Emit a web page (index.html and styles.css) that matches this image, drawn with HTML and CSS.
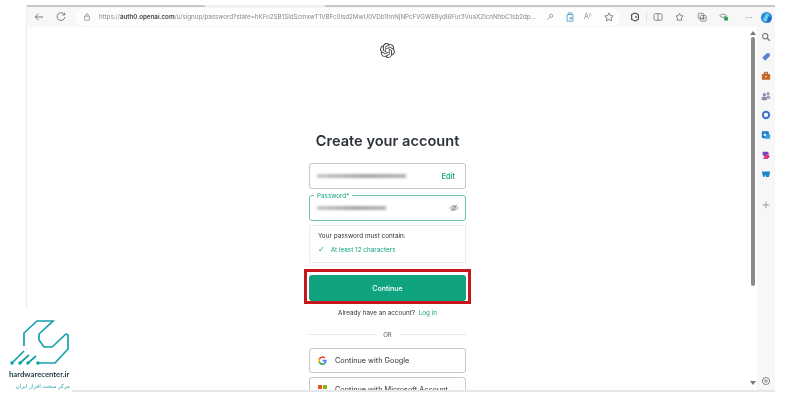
FILE: index.html
```html
<!DOCTYPE html>
<html lang="en">
<head>
<meta charset="utf-8">
<title>Create your account</title>
<link rel="stylesheet" href="styles.css">
</head>
<body>
<div class="window">
  <div class="topline"><span class="seg seg-a"></span><span class="seg seg-b"></span><span class="seg seg-c"></span></div>
  <div class="toolbar">
    <svg class="ic ic-back" viewBox="0 0 12 12"><path d="M11 6H1.5M5.5 2 1.5 6l4 4"/></svg>
    <svg class="ic ic-reload" viewBox="0 0 12 12"><path d="M10 3.2A4.6 4.6 0 1 0 10.6 6M10.3 1v2.6H7.7"/></svg>
    <div class="address">
      <svg class="ic-sm" viewBox="0 0 10 10"><path d="M2 4h6v5H2zM3.5 4V2.4a1.5 1.5 0 0 1 3 0V4"/></svg>
      <span class="url">https://<b>auth0.openai.com</b>/u/signup/password?state=hKFo2SB1SldScmxwT1VBFc0lsd2MwU0VDb1hnNjNPcFVGWE8ydl6Fur3VuaXZlcnNhbC1sb2dp...</span>
      <svg class="ic-sm key" viewBox="0 0 10 10"><circle cx="6.5" cy="3.5" r="2"/><path d="M5 5 1.5 8.5"/></svg>
      <svg class="ic-md wallet" viewBox="0 0 10 12"><path d="M1.5 3h7v8h-7zM3 3V1h4v2"/><circle cx="6" cy="7.5" r="1.2"/></svg>
      <span class="read">A<sup>))</sup></span>
      <svg class="ic-md star" viewBox="0 0 12 12"><path d="m6 1 1.5 3.3 3.6.4-2.7 2.4.8 3.6L6 8.9l-3.2 1.8.8-3.6L.9 4.7l3.6-.4z"/></svg>
    </div>
    <div class="tools">
      <svg class="ic-md dark" viewBox="0 0 12 12"><path d="M6 1.2 10 3v6L6 10.8 2 9V3z"/><path d="M8.5 6H6"/></svg>
      <span class="divider"></span>
      <svg class="ic-md" viewBox="0 0 12 12"><rect x="1.2" y="2" width="9.6" height="8" rx="2"/><path d="M6 2v8"/></svg>
      <svg class="ic-md" viewBox="0 0 12 12"><path d="m5.5 1.5 1.3 2.8 3 .4L7.600 6.800l.6 3H2.500l.5-3-2-2.100 3-.4z"/></svg>
      <svg class="ic-md" viewBox="0 0 12 12"><rect x="1.500" y="1.500" width="6.500" height="6.500" rx="1.500"/><rect x="4" y="4" width="7" height="7" rx="1.500"/><path d="M7.500 5.500v4M5.500 7.500h4"/></svg>
      <svg class="ic-md" viewBox="0 0 12 12"><path d="M1 4.500C3 2 7 2 9 4.500 7 7 3 7 1 4.500z"/><circle class="fill-green" cx="8.500" cy="8" r="2.600"/></svg>
      <span class="dots">···</span>
      <svg class="copilot" viewBox="0 0 14 14"><circle cx="7" cy="7" r="6" fill="#2b8fe0"/><path d="M3 10 7 2.500l3 1-3.500 8z" fill="#6fd0e8"/><path d="M9 6l3.500 1-2 5-3 .5z" fill="#2467c9"/></svg>
    </div>
  </div>
  <div class="body">
    <main class="page">
      <svg class="openai" viewBox="0 0 24 24"><path d="M22.282 9.821a5.985 5.985 0 0 0-.516-4.91 6.046 6.046 0 0 0-6.51-2.9A6.065 6.065 0 0 0 4.981 4.18a5.985 5.985 0 0 0-3.998 2.9 6.046 6.046 0 0 0 .743 7.097 5.98 5.98 0 0 0 .51 4.911 6.051 6.051 0 0 0 6.515 2.9A5.985 5.985 0 0 0 13.26 24a6.056 6.056 0 0 0 5.772-4.206 5.99 5.99 0 0 0 3.997-2.9 6.056 6.056 0 0 0-.747-7.073zM13.26 22.43a4.476 4.476 0 0 1-2.876-1.04l.141-.081 4.779-2.758a.795.795 0 0 0 .392-.681v-6.737l2.02 1.168a.071.071 0 0 1 .038.052v5.583a4.504 4.504 0 0 1-4.494 4.494zM3.6 18.304a4.47 4.47 0 0 1-.535-3.014l.142.085 4.783 2.759a.771.771 0 0 0 .78 0l5.843-3.369v2.332a.08.08 0 0 1-.033.062L9.74 19.95a4.5 4.5 0 0 1-6.14-1.646zM2.34 7.896a4.485 4.485 0 0 1 2.366-1.973V11.6a.766.766 0 0 0 .388.676l5.815 3.355-2.02 1.168a.076.076 0 0 1-.071 0l-4.83-2.786A4.504 4.504 0 0 1 2.34 7.872zm16.597 3.855l-5.833-3.387L15.119 7.2a.076.076 0 0 1 .071 0l4.83 2.791a4.494 4.494 0 0 1-.676 8.105v-5.678a.79.79 0 0 0-.407-.667zm2.01-3.023l-.141-.085-4.774-2.782a.776.776 0 0 0-.785 0L9.409 9.23V6.897a.066.066 0 0 1 .028-.061l4.83-2.787a4.5 4.5 0 0 1 6.68 4.66zm-12.64 4.135l-2.02-1.164a.08.08 0 0 1-.038-.057V6.075a4.5 4.5 0 0 1 7.375-3.453l-.142.08L8.704 5.46a.795.795 0 0 0-.393.681zm1.097-2.365l2.602-1.5 2.607 1.5v2.999l-2.597 1.5-2.607-1.5z"/></svg>
      <h1 class="title">Create your account</h1>
      <div class="form">
        <div class="field">
          <span class="mask mask-email"></span>
          <span class="edit">Edit</span>
        </div>
        <div class="field field-active">
          <span class="float-label">Password*</span>
          <span class="mask mask-pass"></span>
          <svg class="eye" viewBox="0 0 12 12"><path d="M1 6c2.500-3.600 7.500-3.600 10 0-2.500 3.600-7.500 3.600-10 0z"/><circle cx="6" cy="6" r="1.800"/><path d="M9.500 2 2.500 10"/></svg>
        </div>
        <div class="rules">
          <div class="rules-head">Your password must contain:</div>
          <div class="rule"><span class="check">✓</span><span>At least 12 characters</span></div>
        </div>
        <div class="highlight"><button class="continue">Continue</button></div>
        <p class="login">Already have an account? <a class="link">Log in</a></p>
        <div class="or"><span class="rule-line"></span><span class="or-text">OR</span><span class="rule-line"></span></div>
        <div class="social">
          <svg class="brand" viewBox="0 0 24 24"><path fill="#4285f4" d="M23 12.300c0-.8-.1-1.600-.2-2.300H12v4.500h6.200a5.300 5.300 0 0 1-2.300 3.500v2.800h3.700c2.100-2 3.400-5 3.400-8.500z"/><path fill="#34a853" d="M12 24c3.100 0 5.700-1 7.600-2.800L15.900 18.400c-1 .7-2.400 1.100-3.900 1.100-3 0-5.500-2-6.400-4.700H1.800v2.900A12 12 0 0 0 12 24z"/><path fill="#fbbc05" d="M5.600 14.800a7 7 0 0 1 0-4.600V7.300H1.800a12 12 0 0 0 0 10.400z"/><path fill="#ea4335" d="M12 4.800c1.700 0 3.200.6 4.400 1.700l3.300-3.300A12 12 0 0 0 1.800 7.300l3.800 2.900C6.500 7 9 4.800 12 4.800z"/></svg>
          <span>Continue with Google</span>
        </div>
        <div class="social">
          <span class="ms"><i class="r"></i><i class="g"></i><i class="b"></i><i class="y"></i></span>
          <span>Continue with Microsoft Account</span>
        </div>
      </div>
    </main>
    <div class="scrollbar">
      <span class="arrow-up"></span>
      <span class="thumb"></span>
      <span class="arrow-down"></span>
    </div>
    <aside class="sidebar">
      <svg class="side" viewBox="0 0 12 12"><circle cx="5" cy="5" r="3.200" fill="none" stroke="#777" stroke-width="1.300"/><path d="m7.500 7.500 3 3" stroke="#777" stroke-width="1.500"/></svg>
      <svg class="side" viewBox="0 0 12 12"><path d="M1.500 6.500 7 1.500h3.500V5L5 10.500z" fill="#5b7fd0"/></svg>
      <svg class="side" viewBox="0 0 12 12"><rect x="1" y="3.500" width="10" height="7" rx="1" fill="#c8662b"/><rect x="4" y="1.500" width="4" height="2" fill="none" stroke="#a85525"/><rect x="5" y="6" width="2" height="1.500" fill="#f3d9c4"/></svg>
      <svg class="side" viewBox="0 0 12 12"><circle cx="4" cy="4.500" r="2" fill="#8c8ca8"/><circle cx="8.500" cy="3" r="1.800" fill="#9a8fc0"/><rect x="1" y="7" width="6" height="4" fill="#8a8a9a"/><rect x="7" y="5.500" width="4" height="4" fill="#a89fc8"/></svg>
      <svg class="side" viewBox="0 0 12 12"><circle cx="6" cy="6" r="3.800" fill="none" stroke="#3f6fd0" stroke-width="2.400"/></svg>
      <svg class="side" viewBox="0 0 12 12"><rect x="1" y="1.500" width="8.500" height="8.500" rx="1.500" fill="#1a78c8"/><rect x="5" y="5" width="6" height="5.500" fill="#35a5e0"/><circle cx="4.500" cy="5.800" r="1.600" fill="#e6f2fb"/></svg>
      <svg class="side" viewBox="0 0 12 12"><path d="M2 2h6l2 2.500L7 6l3 2-2 2.500H2L5 8 2 6z" fill="#7d3fc0"/><path d="M5 6h5v2.500L8 10.500H3z" fill="#e0357a"/></svg>
      <svg class="side" viewBox="0 0 12 12"><path d="M1 3h10L9.500 9.500H6L5 7 4 9.500H2.500z" fill="#1a86c8"/></svg>
      <svg class="side side-plus" viewBox="0 0 12 12"><path d="M6 2v8M2 6h8" stroke="#888"/></svg>
      <svg class="side side-gear" viewBox="0 0 12 12"><circle cx="6" cy="6" r="4.200" fill="none" stroke="#777" stroke-width="1.300" stroke-dasharray="2 .6"/><circle cx="6" cy="6" r="1.500" fill="none" stroke="#777"/></svg>
    </aside>
  </div>
</div>
<div class="brandmark">
  <svg class="wrench" viewBox="0 0 72 56"><path d="M39 54H55L68 40V26L66 25 52 38H44L39 31V25L53 12H37L24 24V37"/><path d="M12 54 24 42M20 54 29 46M28 54 36 47"/><circle cx="12" cy="54" r="1.800"/><circle cx="20" cy="54" r="1.800"/><circle cx="28" cy="54" r="1.800"/><circle cx="38" cy="54" r="1.800"/></svg>
  <div class="brand-name">hardwarecenter.ir</div>
  <div class="brand-fa" lang="fa" dir="rtl">مرکز سخت افزار ایران</div>
</div>
</body>
</html>
```
FILE: styles.css
```css
* { box-sizing: border-box; }
html, body { margin: 0; padding: 0; }
body {
  width: 800px;
  height: 400px;
  background: #fff;
  overflow: hidden;
  position: relative;
  font-family: "Inter", "Liberation Sans", sans-serif;
  color: #2d333a;
}
.window {
  margin: 5px 0 0 26px;
  width: 749px;
  height: 387px;
  display: flex;
  flex-direction: column;
  border-left: 1px solid #ececec;
  border-bottom: 2px solid #e6e6e6;
  filter: blur(0.5px);
}
.topline { display: flex; height: 2px; flex: none; }
.seg { display: block; height: 2px; background: #c9c9c9; }
.seg-a { width: 178px; }
.seg-b { width: 120px; background: #efefef; }
.seg-c { flex: 1; }

.toolbar {
  height: 20px;
  flex: none;
  background: #f7f7f7;
  display: flex;
  align-items: center;
  padding-left: 7px;
}
.ic { width: 10px; height: 10px; fill: none; stroke: #666; stroke-width: 1; flex: none; }
.ic-reload { margin-left: 12px; }
.ic-sm { width: 8px; height: 8px; fill: none; stroke: #777; stroke-width: .8; flex: none; }
.ic-md { width: 10px; height: 10px; fill: none; stroke: #666; stroke-width: .9; flex: none; }
.address {
  margin-left: 9px;
  width: 545px;
  height: 18px;
  background: #fdfdfd;
  border-radius: 9px;
  display: flex;
  align-items: center;
  padding-left: 8px;
  font-size: 7px;
  color: #8a8a8a;
  white-space: nowrap;
}
.url {
  margin-left: 8px;
  width: 439px;
  flex: none;
  font-size: 6.250px;
  letter-spacing: -0.02px;
}
.url b { color: #444; font-weight: 600; }
.key { margin-left: 8px; }
.wallet { margin-left: 11px; stroke: #3a8fb8; }
.read { margin-left: 9px; width: 10px; color: #888; font-size: 7px; }
.read sup { font-size: 4px; }
.star { margin-left: 10px; }
.tools { display: flex; align-items: center; margin-left: 10px; gap: 12px; }
.tools .dark { stroke: #444; stroke-width: 1.300; }
.divider { width: 1px; height: 10px; background: #e2e2e2; margin: 0 -6px; }
.fill-green { fill: #2f9e58; stroke: none; }
.dots { width: 10px; font-size: 8px; color: #666; text-align: center; margin-left: 3px; }
.copilot { width: 13px; height: 13px; margin-left: -6px; }

.body { flex: 1; min-height: 0; display: flex; }
.page {
  flex: 1;
  min-width: 0;
  background: #fff;
  display: flex;
  flex-direction: column;
  align-items: center;
  overflow: hidden;
  padding: 16px 1px 0 0;
}
.openai { width: 15px; height: 15px; fill: #444; flex: none; }
.title {
  margin: 73px 0 0;
  font-size: 14.600px;
  line-height: 20px;
  font-weight: 600;
  color: #2d333a;
  letter-spacing: 0;
}
.form { margin-top: 12px; width: 157px; flex: none; display: flex; flex-direction: column; }
.field {
  height: 26px;
  border: 1px solid #c2c8d0;
  border-radius: 3px;
  display: flex;
  align-items: center;
  justify-content: space-between;
  padding: 0 10px 0 7px;
  position: relative;
  flex: none;
}
.field-active { margin-top: 6px; border-color: #72c4ae; padding-right: 6px; }
.mask {
  display: block;
  height: 4px;
  filter: blur(1px);
  background: linear-gradient(90deg, #c9c9c9, #a8a8a8 55%, #b5b5b5);
}
.mask-email { width: 89px; }
.mask-pass { width: 69px; }
.edit { font-size: 7.500px; color: #10a37f; font-weight: 500; }
.float-label {
  position: absolute;
  left: 4px;
  top: -4px;
  background: #fff;
  padding: 0 3px;
  font-size: 6.300px;
  line-height: 8px;
  color: #10a37f;
}
.eye { width: 10px; height: 10px; fill: none; stroke: #777; stroke-width: .8; }
.rules {
  margin-top: 4px;
  height: 38px;
  border: 1px solid #ececec;
  padding: 6px 8px;
  font-size: 6.400px;
  flex: none;
}
.rules-head { line-height: 8px; color: #2d333a; }
.rule { margin-top: 6px; display: flex; gap: 6px; color: #10a37f; line-height: 8px; }
.check { color: #10a37f; font-family: "DejaVu Sans", sans-serif; font-size: 8px; }
.highlight {
  margin: 6px -5px 0;
  height: 35px;
  border: 3px solid #c8161d;
  padding: 3px 2px;
  flex: none;
}
.continue {
  display: block;
  width: 100%;
  height: 26px;
  border: 0;
  border-radius: 3px;
  background: #10a37f;
  color: #fff;
  font: 500 7px "Inter", "Liberation Sans", sans-serif;
}
.login { margin: 5px 0 0; text-align: center; font-size: 6.300px; line-height: 9px; color: #2d333a; }
.link { color: #10a37f; margin-left: 2px; }
.or { margin-top: 12px; display: flex; align-items: center; gap: 8px; height: 8px; flex: none; }
.rule-line { flex: 1; height: 1px; background: #e6e6e6; }
.or-text { font-size: 6px; color: #555; }
.social {
  margin-top: 10px;
  height: 25px;
  flex: none;
  border: 1px solid #c2c8d0;
  border-radius: 3px;
  display: flex;
  align-items: center;
  gap: 8px;
  padding-left: 8px;
  font-size: 7.300px;
  color: #2d333a;
}
.social + .social { margin-top: 4px; }
.brand { width: 9px; height: 9px; flex: none; }
.ms { width: 9px; height: 9px; display: grid; grid-template-columns: 1fr 1fr; gap: 1px; flex: none; }
.ms i { display: block; }
.ms .r { background: #f25022; }
.ms .g { background: #7fba00; }
.ms .b { background: #00a4ef; }
.ms .y { background: #ffb900; }

.scrollbar {
  width: 8px;
  flex: none;
  background: #fff;
  display: flex;
  flex-direction: column;
  align-items: center;
  padding-top: 4px;
}
.arrow-up { width: 0; height: 0; border: 3px solid transparent; border-top: 0; border-bottom: 4px solid #777; flex: none; }
.thumb { width: 4px; height: 249px; margin-top: 2px; background: #8a8a8a; border-radius: 2px; flex: none; }
.arrow-down { width: 0; height: 0; border: 3px solid transparent; border-bottom: 0; border-top: 4px solid #777; margin-top: 95px; flex: none; }
.sidebar {
  width: 18px;
  flex: none;
  background: #f7f7f7;
  display: flex;
  flex-direction: column;
  align-items: center;
  padding-top: 5px;
  gap: 9.600px;
}
.side { width: 10px; height: 10px; flex: none; }
.side-plus { margin-top: 11px; }
.side-gear { margin-top: 157px; }

.brandmark {
  position: absolute;
  left: 0;
  top: 309px;
  width: 72px;
  height: 85px;
  background: #fff;
  filter: blur(0.3px);
}
.wrench { display: block; width: 72px; height: 56px; fill: none; stroke: #14a0ad; stroke-width: 1.700; }
.wrench circle { fill: #14a0ad; stroke: none; }
.brand-name { margin-top: 4px; padding-left: 9px; font: 700 7.700px/10px "Lato", "Liberation Sans", sans-serif; color: #1d3a4a; white-space: nowrap; }
.brand-fa { width: 72px; margin-top: 1px; padding-right: 2px; font: 500 5.600px/12px "DejaVu Sans", sans-serif; color: #35a4ad; white-space: nowrap; text-align: right; }
```
